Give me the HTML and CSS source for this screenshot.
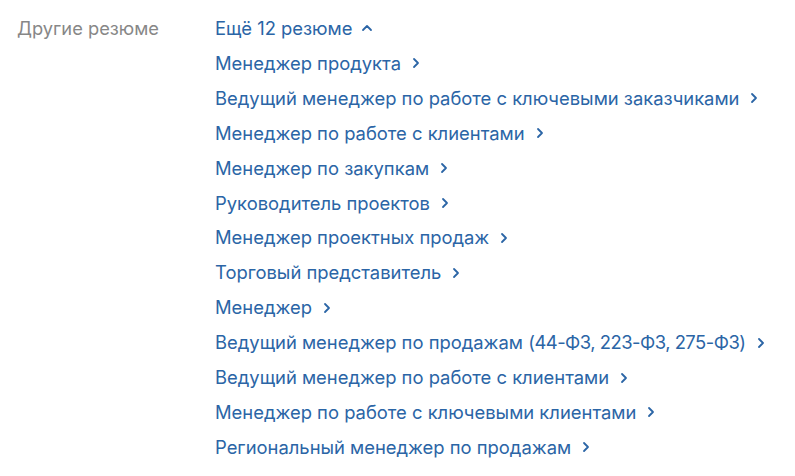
FILE: index.html
```html
<!DOCTYPE html>
<html lang="ru">
<head>
    <meta charset="UTF-8">
    <title>Другие резюме</title>
    <link rel="stylesheet" href="styles.css">
</head>
<body>
    <div class="section">
        <div class="section-title">Другие резюме</div>
        <div class="resume-list">
            <a class="resume-link" href="#"><span>Ещё 12 резюме</span>
                <svg class="chevron" viewBox="0 0 14 14"><path d="M3 9 L7 5 L11 9"/></svg>
            </a>
            <a class="resume-link" href="#"><span>Менеджер продукта</span>
                <svg class="chevron" viewBox="0 0 14 14"><path d="M5 3 L9 7 L5 11"/></svg>
            </a>
            <a class="resume-link" href="#"><span>Ведущий менеджер по работе с ключевыми заказчиками</span>
                <svg class="chevron" viewBox="0 0 14 14"><path d="M5 3 L9 7 L5 11"/></svg>
            </a>
            <a class="resume-link" href="#"><span>Менеджер по работе с клиентами</span>
                <svg class="chevron" viewBox="0 0 14 14"><path d="M5 3 L9 7 L5 11"/></svg>
            </a>
            <a class="resume-link" href="#"><span>Менеджер по закупкам</span>
                <svg class="chevron" viewBox="0 0 14 14"><path d="M5 3 L9 7 L5 11"/></svg>
            </a>
            <a class="resume-link" href="#"><span>Руководитель проектов</span>
                <svg class="chevron" viewBox="0 0 14 14"><path d="M5 3 L9 7 L5 11"/></svg>
            </a>
            <a class="resume-link" href="#"><span>Менеджер проектных продаж</span>
                <svg class="chevron" viewBox="0 0 14 14"><path d="M5 3 L9 7 L5 11"/></svg>
            </a>
            <a class="resume-link" href="#"><span>Торговый представитель</span>
                <svg class="chevron" viewBox="0 0 14 14"><path d="M5 3 L9 7 L5 11"/></svg>
            </a>
            <a class="resume-link" href="#"><span>Менеджер</span>
                <svg class="chevron" viewBox="0 0 14 14"><path d="M5 3 L9 7 L5 11"/></svg>
            </a>
            <a class="resume-link" href="#"><span>Ведущий менеджер по продажам <span class="laws">(44-ФЗ, 223-ФЗ, 275-ФЗ)</span></span>
                <svg class="chevron" viewBox="0 0 14 14"><path d="M5 3 L9 7 L5 11"/></svg>
            </a>
            <a class="resume-link" href="#"><span>Ведущий менеджер по работе с клиентами</span>
                <svg class="chevron" viewBox="0 0 14 14"><path d="M5 3 L9 7 L5 11"/></svg>
            </a>
            <a class="resume-link" href="#"><span>Менеджер по работе с ключевыми клиентами</span>
                <svg class="chevron" viewBox="0 0 14 14"><path d="M5 3 L9 7 L5 11"/></svg>
            </a>
            <a class="resume-link" href="#"><span>Региональный менеджер по продажам</span>
                <svg class="chevron" viewBox="0 0 14 14"><path d="M5 3 L9 7 L5 11"/></svg>
            </a>
        </div>
    </div>
</body>
</html>
```

FILE: styles.css
```css
body {
    font-family: Inter, "Noto Sans", sans-serif;
    background-color: #fff;
    margin: 0;
    padding: 0;
}

.section {
    display: flex;
    padding: 11px 17px;
}

.section-title {
    width: 198px;
    flex-shrink: 0;
    color: #878787;
    font-size: 18.3px;
    line-height: 34.9px;
}

.resume-list {
    display: flex;
    flex-direction: column;
    align-items: flex-start;
}

.resume-link {
    display: flex;
    align-items: center;
    gap: 8px;
    color: #2b65a6;
    font-size: 18.4px;
    line-height: 34.9px;
    text-decoration: none;
}

/* digits in the law numbers run a bit tighter */
.laws {
    letter-spacing: -0.5px;
}

.chevron {
    width: 14px;
    height: 14px;
    fill: none;
    stroke: currentColor;
    stroke-width: 1.8;
    stroke-linecap: round;
    stroke-linejoin: round;
}
```
